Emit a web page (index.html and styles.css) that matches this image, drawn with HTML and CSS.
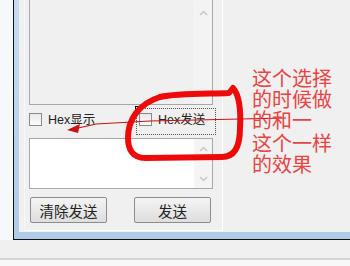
FILE: index.html
```html
<!DOCTYPE html>
<html lang="zh-CN">
  <head>
    <meta charset="UTF-8" />
    <meta name="viewport" content="width=device-width, initial-scale=1.0" />
    <title>串口调试</title>
    <link rel="stylesheet" href="styles.css">
  </head>
  <body>
    <div class="screen">
      <div class="desk">
        <div class="desk-edge"></div>
        <div class="window">
          <div class="client">
            <div class="group">
              <div class="memo memo-recv">
                <div class="scroll scroll-recv">
                  <svg width="9" height="6" viewBox="0 0 9 6"><path d="M1 5 L4.5 1.5 L8 5" fill="none" stroke="#c4c4c4" stroke-width="1.4"/></svg>
                </div>
              </div>

              <div class="opts">
                <label class="opt"><span class="box"></span>Hex显示</label>
                <label class="opt opt-focus"><span class="handle"></span><span class="box"></span>Hex发送</label>
              </div>

              <div class="memo memo-send">
                <div class="scroll scroll-send">
                  <svg width="9" height="6" viewBox="0 0 9 6"><path d="M1 5 L4.5 1.5 L8 5" fill="none" stroke="#c4c4c4" stroke-width="1.4"/></svg>
                  <svg width="9" height="6" viewBox="0 0 9 6"><path d="M1 1 L4.5 4.5 L8 1" fill="none" stroke="#c4c4c4" stroke-width="1.4"/></svg>
                </div>
              </div>

              <div class="btns">
                <button class="btn">清除发送</button>
                <button class="btn">发送</button>
              </div>
            </div>
          </div>
        </div>
      </div>
      <div class="status">
        <div class="status-top"></div>
        <div class="status-bar"></div>
      </div>

      <!-- hand drawn marks over the screenshot -->
      <svg class="marks" width="350" height="266" viewBox="0 0 350 266">
        <path d="M160 97 C178 93 210 94 229 93 L233 88 C240 96 241 110 240 128 C240 148 234 157 222 157 L145 158 C133 158 128 150 128 138 C128 120 138 104 160 97" fill="none" stroke="#ee0a0a" stroke-width="6" stroke-linecap="round" stroke-linejoin="round"/>
        <path d="M286 118 L150 121 L96 124 L74 129" fill="none" stroke="#cc1111" stroke-width="1.2"/>
        <polygon points="67,130 80,124 78,133" fill="#cc1111"/>
      </svg>

      <div class="note">
        <div>这个选择</div>
        <div>的时候做</div>
        <div>的和一</div>
        <div class="note-gap">这个一样</div>
        <div>的效果</div>
      </div>
    </div>
  </body>
</html>
```

FILE: styles.css
```css
* {
  padding: 0;
  margin: 0;
  box-sizing: border-box;
}
body {
  background: #f0f0f0;
  font-family: "Liberation Sans", "Noto Sans CJK SC", sans-serif;
}
.screen {
  position: relative;
  width: 350px;
  height: 266px;
  overflow: hidden;
  background: #f0f0f0;
}
.desk {
  display: flex;
  height: 240px;
}
.desk-edge {
  width: 13px;
  background: #f5f9fc;
}
.window {
  flex: 1;
  display: flex;
  border-left: 1px solid #111;
  border-bottom: 1px solid #111;
  padding: 0 0 7px 5px;
  background: linear-gradient(#c9dcf0, #aecbe8);
}
.client {
  flex: 1;
  display: flex;
  align-items: flex-start;
  background: #f0f0f0;
}
.group {
  width: 199px;
  height: 231px;
  margin-left: 5px;
  padding: 0 9px 0 4px;
  border-left: 1px solid #f8f8f8;
  border-right: 1px solid #fdfdfd;
  border-bottom: 1px solid #fdfdfd;
}
.memo {
  position: relative;
  width: 184px;
  border: 1px solid #a8a8a8;
}
.memo-recv {
  margin-top: -6px;
  height: 111px;
  background: #f0f0f0;
}
.memo-send {
  height: 51px;
  background: #fff;
}
.scroll {
  position: absolute;
  top: 0;
  right: 0;
  bottom: 0;
  width: 18px;
  display: flex;
  flex-direction: column;
  align-items: center;
  justify-content: space-between;
  border-left: 1px solid #f6f6f6;
}
.scroll-recv {
  padding-top: 15px;
  background: #f3f3f3;
}
.scroll-send {
  padding: 7px 0 6px;
  background: #f4f4f4;
}
.opts {
  display: flex;
  align-items: flex-start;
  height: 33px;
  padding-top: 3px;
}
.opt {
  display: flex;
  align-items: flex-start;
  flex-shrink: 0;
  font-size: 12.5px;
  line-height: 14px;
  color: #222;
}
.opt:first-child {
  width: 107px;
  padding-top: 5px;
}
.opt-focus {
  position: relative;
  width: 80px;
  height: 27px;
  border: 1px dotted #555;
  padding: 4px 2px;
}
.box {
  width: 13px;
  height: 13px;
  margin-right: 6px;
  border: 1px solid #8a8a8a;
  background: linear-gradient(#e9e9e9, #fbfbfb);
}
.handle {
  position: absolute;
  left: -2px;
  top: -3px;
  width: 4px;
  height: 4px;
  border: 1px solid #000;
  background: #fff;
}
.btns {
  display: flex;
  gap: 27px;
  margin-top: 8px;
  padding-left: 1px;
}
.btn {
  width: 77px;
  height: 26px;
  border: 1px solid #8c8c8c;
  border-radius: 2px;
  background: linear-gradient(#f4f4f4, #e9e9e9 50%, #dedede);
  font-family: "Noto Sans CJK SC", sans-serif;
  font-size: 14.5px;
  color: #222;
}
.status {
  display: flex;
  flex-direction: column;
  height: 26px;
}
.status-top {
  height: 18px;
}
.status-bar {
  flex: 1;
  border-top: 2px solid #d4d4d4;
  background: #f8f8f8;
}
.marks {
  position: absolute;
  left: 0;
  top: 0;
  pointer-events: none;
}
.note {
  position: absolute;
  left: 252px;
  top: 67px;
  font-family: "Noto Sans CJK SC", sans-serif;
  font-size: 20px;
  line-height: 21px;
  color: #e84444;
}
.note-gap {
  margin-top: 2px;
}
```
